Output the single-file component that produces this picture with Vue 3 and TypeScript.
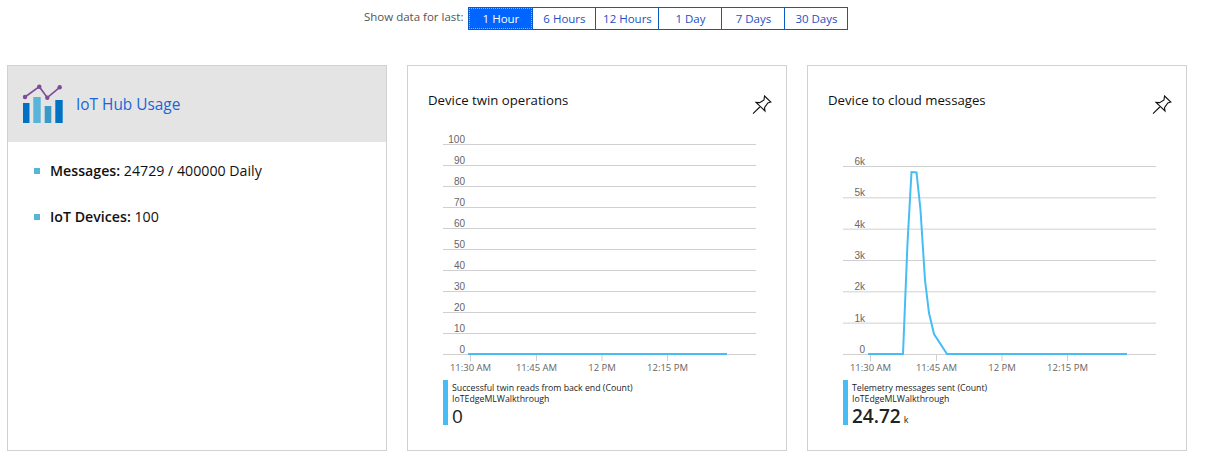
<script setup lang="ts">
/* Types */
interface Chart {
    title: string
    ticks: { label: string, y: number }[]
    line: string
    legend: string
    value: string
    unit?: string
}

/* Data */
const ranges = ['1 Hour', '6 Hours', '12 Hours', '1 Day', '7 Days', '30 Days'];
const hours = [
    { label: '11:30 AM', x: 62.5 },
    { label: '11:45 AM', x: 128.5 },
    { label: '12 PM', x: 194 },
    { label: '12:15 PM', x: 259.5 },
];

const twinTicks = Array.from({ length: 11 }, (_, i) => ({
    label: String(100 - i * 10),
    y: 14.5 + i * 21,
}));
const cloudTicks = ['6k', '5k', '4k', '3k', '2k', '1k', '0'].map((label, i) => ({
    label,
    y: 36.5 + i * 31.33,
}));

const charts: Chart[] = [
    {
        title: 'Device twin operations',
        ticks: twinTicks,
        line: '60,224 319,224',
        legend: 'Successful twin reads from back end (Count)',
        value: '0',
    },
    {
        title: 'Device to cloud messages',
        ticks: cloudTicks,
        line: '60,224 95,224 99.5,113 103.5,42 108.5,42.5 112.5,80 117,150 121,183 126,204 139,224 319,224',
        legend: 'Telemetry messages sent (Count)',
        value: '24.72',
        unit: 'k',
    },
];
</script>

<template>
    <div class="page">
        <div class="range">
            <span class="range__label">Show data for last:</span>
            <div class="range__buttons">
                <button v-for="(range, i) in ranges" :key="range" class="range__button"
                    :class="{ 'range__button--active': i === 0 }">{{ range }}</button>
            </div>
        </div>

        <div class="cards">
            <section class="card">
                <header class="usage__header">
                    <svg class="usage__icon" width="42" height="42" viewBox="0 0 42 42">
                        <rect x="1" y="20" width="6.5" height="20" fill="#0072c6" />
                        <rect x="11.3" y="14" width="7.4" height="26" fill="#59b4d9" />
                        <rect x="22.7" y="23" width="6.6" height="17" fill="#3999c6" />
                        <rect x="33.3" y="17" width="7.4" height="23" fill="#0072c6" />
                        <polyline points="3,14 17.3,3.7 25.3,14.7 37.7,4.3" fill="none" stroke="#7f4a98" stroke-width="1.6" />
                        <circle cx="3" cy="14" r="2.2" fill="#7f4a98" />
                        <circle cx="17.3" cy="3.7" r="2.2" fill="#7f4a98" />
                        <circle cx="25.3" cy="14.7" r="2.2" fill="#7f4a98" />
                        <circle cx="37.7" cy="4.3" r="2.2" fill="#7f4a98" />
                    </svg>
                    <span class="usage__title">IoT Hub Usage</span>
                </header>
                <ul class="usage__list">
                    <li class="usage__item"><b>Messages:</b> 24729 / 400000 Daily</li>
                    <li class="usage__item"><b>IoT Devices:</b> 100</li>
                </ul>
            </section>

            <section v-for="chart in charts" :key="chart.title" class="card chart">
                <div class="chart__head">
                    <span class="chart__title">{{ chart.title }}</span>
                    <svg class="chart__pin" width="20" height="20" viewBox="0 0 20 20" fill="none" stroke="#111" stroke-width="1.1">
                        <path d="M12.5 1 L18.8 7 L15.8 8 L12.5 12.7 L13 16 L4 7.4 L7.6 7.6 L12 5 Z" />
                        <path d="M1 18.7 L7.8 12" />
                    </svg>
                </div>

                <svg class="chart__plot" width="378" height="245" viewBox="0 0 378 245">
                    <g v-for="tick in chart.ticks" :key="tick.label">
                        <line x1="35" x2="348" :y1="tick.y" :y2="tick.y" stroke="#d0d0d0" />
                        <text x="57" :y="tick.y - 1.5" text-anchor="end" class="chart__tick">{{ tick.label }}</text>
                    </g>
                    <g v-for="hour in hours" :key="hour.label">
                        <line :x1="hour.x" :x2="hour.x" y1="225" y2="231" stroke="#d0d0d0" />
                        <text :x="hour.x" y="241" text-anchor="middle" class="chart__hour">{{ hour.label }}</text>
                    </g>
                    <polyline :points="chart.line" fill="none" stroke="#47bdf5" stroke-width="2" />
                </svg>

                <div class="legend">
                    <div class="legend__title">{{ chart.legend }}</div>
                    <div class="legend__source">IoTEdgeMLWalkthrough</div>
                    <div class="legend__value">
                        <span :class="{ 'legend__number--bold': chart.unit }">{{ chart.value }}</span>
                        <span v-if="chart.unit" class="legend__unit">{{ chart.unit }}</span>
                    </div>
                </div>
            </section>
        </div>
    </div>
</template>

<style>
html,
body {
    background: #fff;
}
</style>

<style scoped>
.page {
    width: 1209px;
    height: 458px;
    box-sizing: border-box;
    padding: 7px 0 0 7px;
    overflow: hidden;
    font-family: "Open Sans", "Noto Sans", sans-serif;
    color: #111;
}

.range {
    display: flex;
    align-items: flex-start;
    gap: 5px;
    margin-left: 357px;
}

.range__label {
    font-size: 11.5px;
    line-height: 19px;
    color: #555;
}

.range__buttons {
    display: flex;
    border: 1px solid #0a5bc4;
}

.range__button {
    box-sizing: border-box;
    width: 63px;
    height: 21px;
    padding: 0;
    border: 0;
    border-left: 1px solid #0a5bc4;
    background: #fff;
    color: #1b4fc4;
    font-family: inherit;
    font-size: 11.5px;
}

.range__button--active {
    border-left: 0;
    outline: 1px dotted #6fc0ff;
    outline-offset: -1px;
    background: #0064ff;
    color: #fff;
}

.cards {
    display: flex;
    gap: 20px;
    margin-top: 35px;
}

.card {
    box-sizing: border-box;
    width: 380px;
    height: 386px;
    border: 1px solid #d2d2d2;
}

.usage__header {
    display: flex;
    align-items: center;
    gap: 12px;
    box-sizing: border-box;
    height: 76px;
    padding: 0 14px 0 14px;
    background: #e4e4e4;
}

.usage__title {
    font-size: 15.4px;
    color: #1a66d8;
}

.usage__list {
    display: flex;
    flex-direction: column;
    gap: 26px;
    margin: 0;
    padding: 19px 0 0 42px;
    list-style: none;
}

.usage__item {
    position: relative;
    font-size: 14.2px;
    line-height: 20px;
    color: #111;
}

.usage__item b {
    font-weight: 600;
}

.usage__item::before {
    content: '';
    position: absolute;
    left: -16px;
    top: 7px;
    width: 6px;
    height: 6px;
    background: #59b4d9;
}

.chart__head {
    display: flex;
    justify-content: space-between;
    align-items: flex-start;
    height: 64px;
    box-sizing: border-box;
    padding: 24px 14px 0 20px;
}

.chart__title {
    font-size: 13.2px;
    line-height: 20px;
}

.chart__pin {
    margin-top: 5px;
}

.chart__plot {
    display: block;
}

.chart__tick,
.chart__hour {
    font-family: "Liberation Sans", sans-serif;
    font-size: 10px;
    fill: #666;
}

.chart__hour {
    font-family: "Open Sans", sans-serif;
    font-size: 9.5px;
}

.legend {
    box-sizing: border-box;
    height: 45px;
    margin: 5px 0 0 35px;
    padding: 3px 0 0 4px;
    border-left: 5px solid #47bdf5;
}

.legend__title,
.legend__source {
    font-size: 8.75px;
    line-height: 11px;
    color: #222;
}

.legend__value {
    font-size: 19px;
    line-height: 22px;
    color: #222;
}

.legend__number--bold {
    font-weight: 600;
}

.legend__unit {
    margin-left: 3px;
    font-size: 9px;
}
</style>
